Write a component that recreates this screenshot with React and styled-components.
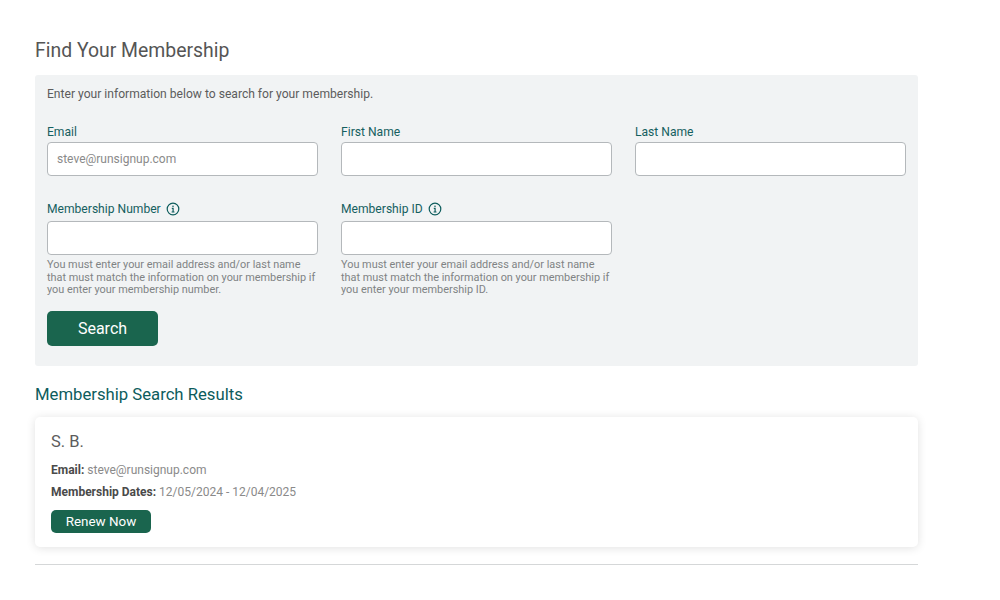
import React from "react";
import styled, { createGlobalStyle } from "styled-components";

const Global = createGlobalStyle`
  * { box-sizing: border-box; }
  body {
    margin: 0;
    background: #fff;
    font-family: Roboto, "Liberation Sans", sans-serif;
  }
`;

const Page = styled.div`
  width: 883px;
  margin-left: 35px;
  padding-top: 39px;
`;

const Heading = styled.h2`
  margin: 0 0 12px;
  font-size: 19.4px;
  line-height: 24px;
  font-weight: 400;
  color: #555;
`;

const Panel = styled.div`
  background: #f1f3f4;
  border-radius: 3px;
  padding: 11px 12px 20px;
`;

const Intro = styled.p`
  margin: 0 0 22px;
  font-size: 12.1px;
  line-height: 16px;
  color: #5c5c5c;
`;

const FormGrid = styled.div`
  display: grid;
  grid-template-columns: repeat(3, 271px);
  column-gap: 23px;
  row-gap: 25px;
`;

const Field = styled.div`
  display: flex;
  flex-direction: column;
`;

const Label = styled.label`
  display: flex;
  align-items: center;
  gap: 5px;
  height: 16px;
  margin-bottom: ${(props) => (props.$withIcon ? "4px" : "2px")};
  font-size: 12.1px;
  line-height: 16px;
  color: #15605f;
`;

const Input = styled.input`
  width: 100%;
  height: 34px;
  padding: 0 9px;
  background: #fff;
  border: 1px solid #b4b8bb;
  border-radius: 4px;
  font-family: inherit;
  font-size: 12px;
  color: #555;
  &::placeholder {
    color: #8a8a8a;
    opacity: 1;
  }
`;

const Hint = styled.p`
  margin: 4px 0 0;
  font-size: 10.9px;
  line-height: 12.5px;
  color: #808384;
`;

const SearchButton = styled.button`
  display: block;
  width: 111px;
  height: 35px;
  margin-top: 14px;
  background: #1a654e;
  color: #fff;
  border: 0;
  border-radius: 5px;
  font-family: inherit;
  font-size: 16px;
`;

const ResultsHeading = styled.h3`
  margin: 18px 0 11px;
  font-size: 16.7px;
  line-height: 22px;
  font-weight: 400;
  color: #0d5c5c;
`;

const Card = styled.div`
  background: #fff;
  border-radius: 5px;
  box-shadow: 0 1px 10px rgba(0, 0, 0, 0.12);
  padding: 15px 16px 14px;
`;

const Name = styled.div`
  font-size: 16.5px;
  line-height: 20px;
  color: #5c5c5c;
  margin-bottom: 10px;
`;

const Detail = styled.div`
  font-size: 12px;
  line-height: 16px;
  color: #8a8a8a;
  margin-bottom: 6px;
  b {
    font-weight: 700;
    color: #4a4a4a;
  }
`;

const RenewButton = styled.button`
  display: block;
  width: 100px;
  height: 23px;
  margin-top: 10px;
  background: #1a654e;
  color: #fff;
  border: 0;
  border-radius: 5px;
  font-family: inherit;
  font-size: 13.4px;
`;

const Rule = styled.hr`
  margin: 17px 0 0;
  border: 0;
  border-top: 1px solid #d5d7d8;
`;

const InfoIcon = () => (
  <svg width="14" height="14" viewBox="0 0 14 14" fill="none" stroke="#0d5c5c">
    <circle cx="7" cy="7" r="5.8" strokeWidth="1.2" />
    <path d="M5.8 6.3H7.1V10M5.6 10H8.5" strokeWidth="1.2" />
    <circle cx="7" cy="4.2" r="0.8" fill="#0d5c5c" stroke="none" />
  </svg>
);

export default function App() {
  return (
    <Page>
      <Global />
      <Heading>Find Your Membership</Heading>
      <Panel>
        <Intro>Enter your information below to search for your membership.</Intro>
        <FormGrid>
          <Field>
            <Label>Email</Label>
            <Input placeholder="steve@runsignup.com" />
          </Field>
          <Field>
            <Label>First Name</Label>
            <Input />
          </Field>
          <Field>
            <Label>Last Name</Label>
            <Input />
          </Field>
          <Field>
            <Label $withIcon>
              Membership Number <InfoIcon />
            </Label>
            <Input />
            <Hint>
              You must enter your email address and/or last name that must match
              the information on your membership if you enter your membership
              number.
            </Hint>
          </Field>
          <Field>
            <Label $withIcon>
              Membership ID <InfoIcon />
            </Label>
            <Input />
            <Hint>
              You must enter your email address and/or last name that must match
              the information on your membership if you enter your membership
              ID.
            </Hint>
          </Field>
        </FormGrid>
        <SearchButton>Search</SearchButton>
      </Panel>
      <ResultsHeading>Membership Search Results</ResultsHeading>
      <Card>
        <Name>S. B.</Name>
        <Detail>
          <b>Email:</b> steve@runsignup.com
        </Detail>
        <Detail>
          <b>Membership Dates:</b> 12/05/2024 - 12/04/2025
        </Detail>
        <RenewButton>Renew Now</RenewButton>
      </Card>
      <Rule />
    </Page>
  );
}
